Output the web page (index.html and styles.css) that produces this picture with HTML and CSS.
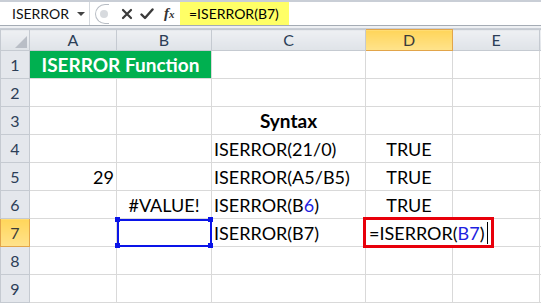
FILE: index.html
```html
<!DOCTYPE html>
<html lang="en">
<head>
<meta charset="utf-8">
<title>ISERROR Function</title>
<link rel="stylesheet" href="styles.css">
</head>
<body>
<div class="fbar">
  <div class="namebox">ISERROR<span class="drop"></span></div>
  <div class="tools">
    <span class="pill"><span class="dot"></span></span>
    <svg class="ico" width="12" height="12" viewBox="0 0 12 12"><path d="M2 2 L10 10 M10 2 L2 10" stroke="#3a3a3a" stroke-width="2.2" stroke-linecap="round"/></svg>
    <svg class="ico" width="14" height="12" viewBox="0 0 14 12"><path d="M1.5 6.5 L5 10 L12.5 1.5" stroke="#3a3a3a" stroke-width="2.4" fill="none" stroke-linecap="round" stroke-linejoin="round"/></svg>
    <span class="fx"><i>f</i><i class="x">x</i></span>
  </div>
  <div class="formula">=ISERROR(B7)</div>
  <div class="rest"></div>
</div>
<div class="gap"></div>
<table class="sheet">
  <colgroup>
    <col class="c0"><col class="ca"><col class="cb"><col class="cc"><col class="cd"><col class="ce"><col class="cf">
  </colgroup>
  <tr class="head">
    <th class="corner"><span class="tri"></span></th><th>A</th><th>B</th><th>C</th><th class="act">D</th><th>E</th><th></th>
  </tr>
  <tr>
    <th>1</th><td colspan="2" class="title">ISERROR Function</td><td></td><td></td><td></td><td></td>
  </tr>
  <tr>
    <th>2</th><td></td><td></td><td></td><td></td><td></td><td></td>
  </tr>
  <tr>
    <th>3</th><td></td><td></td><td class="bold mid">Syntax</td><td></td><td></td><td></td>
  </tr>
  <tr>
    <th>4</th><td></td><td></td><td>ISERROR(21/0)</td><td class="mid">TRUE</td><td></td><td></td>
  </tr>
  <tr>
    <th>5</th><td class="num">29</td><td></td><td>ISERROR(A5/B5)</td><td class="mid">TRUE</td><td></td><td></td>
  </tr>
  <tr>
    <th>6</th><td></td><td class="mid">#VALUE!</td><td>ISERROR(B<span class="ref">6</span>)</td><td class="mid">TRUE</td><td></td><td></td>
  </tr>
  <tr>
    <th class="act">7</th><td></td>
    <td class="sel"><span class="h tl"></span><span class="h tr"></span><span class="h bl"></span><span class="h br"></span></td>
    <td>ISERROR(B7)</td>
    <td class="edit"><div class="editor">=ISERROR(<span class="ref">B7</span>)<span class="caret"></span></div></td>
    <td></td><td></td>
  </tr>
  <tr>
    <th>8</th><td></td><td></td><td></td><td></td><td></td><td></td>
  </tr>
  <tr>
    <th>9</th><td></td><td></td><td></td><td></td><td></td><td></td>
  </tr>
</table>
</body>
</html>
```

FILE: styles.css
```css
body {
  margin: 0;
  width: 541px;
  height: 304px;
  overflow: hidden;
  background: #fff;
  font-family: Lato, "Open Sans", sans-serif;
  color: #000;
}
.fbar {
  display: flex;
  height: 23px;
  border-top: 2px solid #c9ced6;
  border-bottom: 1px solid #a5acb5;
  background: #fff;
}
.namebox {
  width: 90px;
  border-right: 1px solid #d5d9de;
  display: flex;
  align-items: center;
  padding-left: 12px;
  box-sizing: border-box;
  font-size: 14px;
  color: #111;
  position: relative;
}
.drop {
  position: absolute;
  right: 4px;
  top: 10px;
  border-left: 4px solid transparent;
  border-right: 4px solid transparent;
  border-top: 4px solid #444;
}
.tools {
  width: 90px;
  display: flex;
  align-items: center;
  gap: 7px;
  padding-left: 5px;
  box-sizing: border-box;
}
.pill {
  width: 13px;
  height: 18px;
  border: 1px solid #b8bdc4;
  border-right: none;
  border-radius: 10px 0 0 10px;
  display: flex;
  align-items: center;
  justify-content: center;
  margin-right: 5px;
}
.dot {
  width: 8px;
  height: 8px;
  border-radius: 50%;
  background: #d7dade;
  margin-left: 3px;
}
.fx {
  font-family: "Liberation Serif", serif;
  font-size: 15px;
  color: #333;
  font-weight: bold;
  margin-left: 3px;
}
.fx .x {
  font-size: 11px;
}
.formula {
  width: 109px;
  background: #ffff66;
  font-size: 14px;
  display: flex;
  align-items: center;
  padding-left: 9px;
  box-sizing: border-box;
}
.rest {
  flex: 1;
}
.gap {
  height: 2px;
  background: #eef0f3;
  border-bottom: 1px solid #c9ced6;
}
.sheet {
  border-collapse: collapse;
  table-layout: fixed;
  width: 541px;
  font-size: 18px;
}
.c0 { width: 29px; }
.ca { width: 87px; }
.cb { width: 95px; }
.cc { width: 154px; }
.cd { width: 87px; }
.ce { width: 87px; }
.cf { width: 2px; }
.sheet td, .sheet th {
  border: 1px solid #d9d9d9;
  height: 27px;
  padding: 0 2px;
  white-space: nowrap;
  overflow: visible;
}
.sheet th {
  background: #e4e7ec;
  border-color: #c5cad1;
  color: #2c3e57;
  font-weight: normal;
  font-size: 16px;
  text-align: center;
  padding: 0;
}
.sheet tr.head th {
  height: 20px;
  line-height: 18px;
  background: linear-gradient(#eef0f3, #dfe3e8);
}
.sheet tr.head th.corner {
  position: relative;
}
.tri {
  position: absolute;
  right: 2px;
  bottom: 2px;
  border-left: 12px solid transparent;
  border-bottom: 12px solid #b9bec6;
}
.sheet th.act, .sheet tr.head th.act {
  background: linear-gradient(#ffd55a, #ffe38c);
  border-color: #e2a54a;
  color: #3a3a3a;
}
.title {
  background: #00b050;
  color: #fff;
  font-weight: bold;
  font-size: 19px;
  text-align: center;
}
.bold {
  font-weight: bold;
  font-size: 19px;
}
.mid { text-align: center; }
.num { text-align: right; padding-right: 4px; }
.ref { color: #1f1fe0; }
.sel {
  position: relative;
  outline: 2px solid #0a14e8;
  outline-offset: -2px;
}
.h {
  position: absolute;
  width: 5px;
  height: 5px;
  background: #0a14e8;
}
.tl { left: -2px; top: -2px; }
.tr { right: -2px; top: -2px; }
.bl { left: -2px; bottom: -2px; }
.br { right: -2px; bottom: -2px; }
.edit {
  position: relative;
}
.editor {
  position: absolute;
  left: -3px;
  top: -2px;
  width: 122px;
  height: 25px;
  border: 3px solid #e8000b;
  background: #fff;
  display: flex;
  align-items: center;
  padding-left: 3px;
}
.caret {
  width: 1px;
  height: 22px;
  background: #000;
  margin-left: 3px;
}
```
